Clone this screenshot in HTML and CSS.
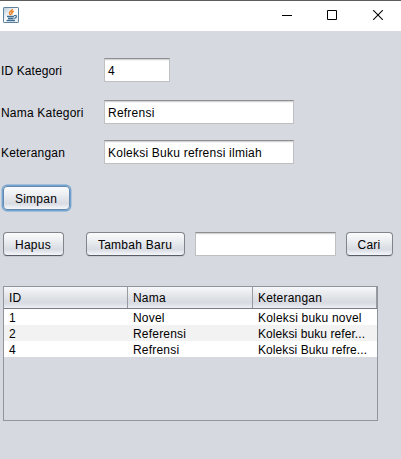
FILE: index.html
```html
<!DOCTYPE html>
<html lang="id">
<head>
<meta charset="utf-8">
<title>Kategori</title>
<link rel="stylesheet" href="styles.css">
</head>
<body>
<div class="window">
  <header class="titlebar">
    <svg class="java" width="16" height="16" viewBox="0 0 16 16">
      <defs><linearGradient id="ib" x1="0" y1="0" x2="1" y2="1"><stop offset="0" stop-color="#b9cbd9"/><stop offset=".5" stop-color="#fff"/><stop offset="1" stop-color="#e3eaf0"/></linearGradient></defs>
      <rect x=".5" y=".5" width="15" height="15" rx=".6" fill="url(#ib)" stroke="#5f829e"/>
      <path d="M9.500 2C9.500 4 6 4.300 6.500 6.200C6.800 7 7.500 7.300 7.500 8.300M10.800 4.300C8.500 5.200 8.300 6 9.300 7.500" fill="none" stroke="#e77f22" stroke-width="1.500"/>
      <path d="M4 9.500H11M5 11.500H10.500M3.500 13.500H12" fill="none" stroke="#3f6e92" stroke-width="1.300"/>
      <path d="M11 8.700C14.400 7.700 14 11 11.200 11.300" fill="none" stroke="#3f6e92" stroke-width="1.200"/>
    </svg>
    <svg class="controls" width="102" height="10" viewBox="0 0 102 10" fill="none" stroke="#000">
      <path d="M0 5.500H10"/>
      <path d="M45.500 .5H54.500V9.500H45.500Z"/>
      <path d="M91.200 .2L100.800 9.800M100.800 .2L91.200 9.800" stroke-width="1.100"/>
    </svg>
  </header>
  <main class="form">
    <div class="row"><label class="l1">ID Kategori</label><div class="field short">4</div></div>
    <div class="row second"><label>Nama Kategori</label><div class="field">Refrensi</div></div>
    <div class="row third"><label>Keterangan</label><div class="field">Koleksi Buku refrensi ilmiah</div></div>
    <button class="btn save focused">Simpan</button>
    <div class="actions">
      <button class="btn delete">Hapus</button>
      <button class="btn add">Tambah Baru</button>
      <div class="field search"></div>
      <button class="btn find">Cari</button>
    </div>
    <div class="table">
      <div class="tr head"><span>ID</span><span>Nama</span><span>Keterangan</span></div>
      <div class="tr"><span>1</span><span>Novel</span><span>Koleksi buku novel</span></div>
      <div class="tr alt"><span>2</span><span>Referensi</span><span class="cut">Koleksi buku refer...</span></div>
      <div class="tr"><span>4</span><span>Refrensi</span><span class="cut">Koleksi Buku refre...</span></div>
    </div>
  </main>
</div>
</body>
</html>
```
FILE: styles.css
```css
* { box-sizing: border-box; }
body { margin: 0; background: #d6d9e0; color: #000; font: 12px/16px "Liberation Sans", Arial, sans-serif; letter-spacing: .2px; overflow: hidden; }
.window { width: 401px; height: 459px; }
.titlebar { height: 31px; background: #fff; border-top: 1px solid #5d5d5d; display: flex; justify-content: space-between; padding: 6px 18px 0 3px; }
.controls { margin-top: 3px; margin-right: -1px; }
.form { padding-top: 27px; }
.row { display: flex; height: 24px; align-items: center; }
.row label { width: 104px; padding: 2px 0 0 1px; white-space: nowrap; }
.row .l1 { letter-spacing: .1px; }
.second { margin-top: 18px; }
.third { margin-top: 16px; }
.field { width: 190px; height: 24px; border: 1px solid #bfc0c2; border-top-color: #8d8e8f; background: #fff; box-shadow: inset 0 1px #d4d5d6, inset 0 2px #f5f5f5; padding: 4px 3px 0; white-space: nowrap; letter-spacing: .23px; }
.short { width: 66px; }
.btn { display: block; height: 24px; padding: 1px 1px 0 0; border: 1px solid #80858c; border-bottom-color: #595e66; border-radius: 4px; background: linear-gradient(#fbfbfc, #eceef1 35%, #dfe2e7 60%, #d9dce3 75%, #f4f6fa); color: #000; font: inherit; letter-spacing: .25px; white-space: nowrap; box-shadow: 0 1px #c7cad1; }
.save { width: 67px; margin: 22px 0 0 3px; }
.focused { border-color: #648baf; box-shadow: 0 0 0 1.400px #73a4d1; }
.actions { display: flex; margin: 22px 0 0 3px; }
.delete { width: 61px; }
.add { width: 99px; margin-left: 22px; }
.search { width: 141px; margin-left: 10px; }
.find { width: 47px; margin-left: 10px; }
.table { width: 375px; height: 135px; margin: 30px 0 0 3px; border: 1px solid #92959d; }
.tr { display: grid; grid-template-columns: 124px 125px 124px; height: 16px; background: #fff; }
.tr span { padding: 1px 0 0 5px; white-space: nowrap; }
.tr .cut { letter-spacing: .08px; }
.alt { background: #f2f2f2; }
.head { height: 22px; border-bottom: 1px solid #777b86; background: linear-gradient(#f7f8fa, #e4e6ea 40%, #d7dae1 75%, #eceff5); }
.head span { padding-top: 3px; border-right: 1px solid #989ba2; }
```
